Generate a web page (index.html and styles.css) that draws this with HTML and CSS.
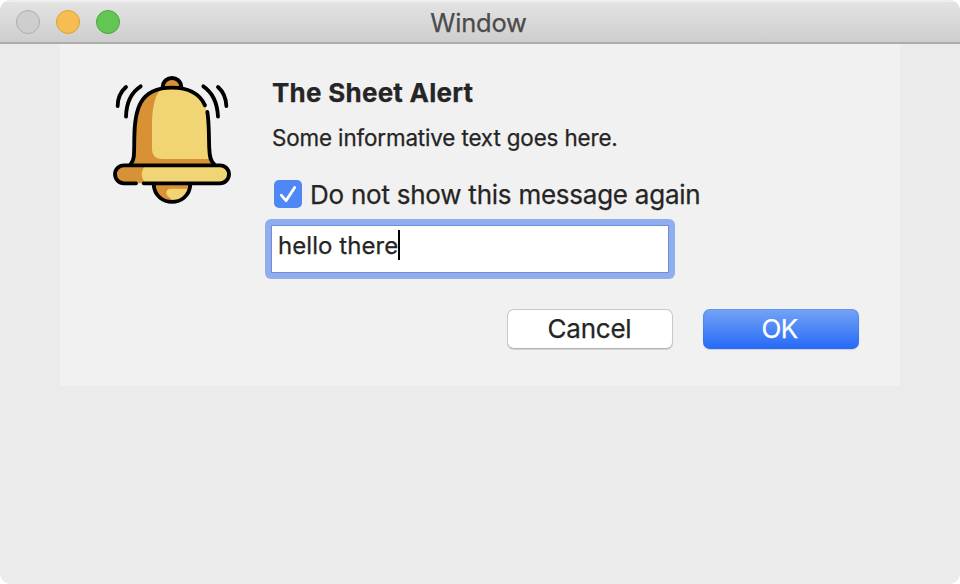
FILE: index.html
```html
<!DOCTYPE html>
<html lang="en">
<head>
<meta charset="utf-8">
<title>Window</title>
<link rel="stylesheet" href="styles.css">
</head>
<body>
<div class="window">
  <header class="titlebar">
    <div class="lights"><span class="light"></span><span class="light minimize"></span><span class="light zoom"></span></div>
    <span class="window-title">Window</span>
  </header>
  <main class="sheet">
    <svg class="bell" viewBox="0 0 435 450" fill="none" stroke-linecap="round" stroke-linejoin="round">
      <path d="M188 66C190 30 242 30 244 66Z" fill="#d99136"/>
      <path d="M160 357C162 429 270 429 272 357Z" fill="#d99136"/>
      <path d="M268 371H212C196 371 195 390 208 397L215 404C244 407 262 394 268 371Z" fill="#f1d474"/>
      <path d="M92 297C104 285 102 269 103 216C104 138 116 68 216 68C316 68 328 138 328 216C329 269 329 285 342 297Z" fill="#d99136"/>
      <path d="M186 71C163 85 156 140 156 180V250C156 272 166 282 188 282H332C328 262 328 240 328 216C328 138 316 68 216 68C206 68 194 68 186 71Z" fill="#f1d474"/>
      <rect x="45" y="301" width="342" height="54" rx="27" fill="#d99136"/>
      <path d="M138 301H360A27 27 0 0 1 360 355H138C121 340 121 316 138 301Z" fill="#f1d474"/>
      <g stroke="#000" stroke-width="11.5">
        <path d="M188 66C190 30 242 30 244 66M161 359C166 428 266 428 271 359"/>
        <path d="M92 297C104 285 102 269 103 216C104 138 116 68 216 68C270 68 300 88 315 121M322 141C328 174 326 220 328 253C329 275 331 287 342 297"/>
        <path d="M108 355H72A27 27 0 0 1 72 301H360A27 27 0 0 1 360 355H131"/>
        <path d="M78 66C62 80 53 100 53 123M122 64C94 82 79 114 78 155M354 66C370 80 378 100 379 123M310 64C337 82 352 114 354 155"/>
      </g>
    </svg>
    <div class="content">
      <h1 class="message">The Sheet Alert</h1>
      <p class="info">Some informative text goes here.</p>
      <div class="suppress">
        <span class="checkbox"><svg viewBox="0 0 28 28"><path d="M7.2 15.2 12 20.7 20.7 7.5" fill="none" stroke="#fff" stroke-width="2.8" stroke-linecap="round" stroke-linejoin="round"/></svg></span>
        <span class="suppress-label">Do not show this message again</span>
      </div>
      <div class="focus-ring">
        <div class="field"><span class="value">hello there</span><span class="caret"></span></div>
      </div>
      <div class="actions">
        <button class="button cancel">Cancel</button>
        <button class="button default">OK</button>
      </div>
    </div>
  </main>
</div>
</body>
</html>
```
FILE: styles.css
```css
* { box-sizing: border-box; }
body { margin: 0; background: #fff; font-family: Inter, "Liberation Sans", sans-serif; color: #252525; }
.window { height: 584px; background: #ebebeb; border-radius: 11px; overflow: hidden; -webkit-text-stroke: 0.25px; }
.titlebar {
  height: 44px; display: grid; grid-template-columns: 1fr auto 1fr; align-items: center;
  background: linear-gradient(#e4e4e4, #cecece); border-bottom: 2px solid #acacac;
  box-shadow: inset 0 2px 0 #efefef;
}
.lights { display: flex; gap: 16px; padding: 2px 0 0 16px; }
.light { width: 24px; height: 24px; border-radius: 50%; background: #cecece; border: 1px solid #adadad; }
.minimize { background: #f6be50; border-color: #dd9f3d; }
.zoom { background: #62c655; border-color: #4aa73c; }
.window-title { font-size: 25.5px; line-height: 32px; letter-spacing: -0.2px; color: #4b4b4b; padding: 3px 3px 0 0; }
.sheet { width: 840px; height: 342px; margin: 0 auto; background: #f1f1f1; padding: 21px 41px 0 40px; display: flex; gap: 27px; }
.bell { width: 145px; height: 150px; flex: none; }
.content { flex: 1; padding-top: 12px; }
.message { margin: 0; font-size: 26px; line-height: 32px; font-weight: 700; letter-spacing: 0.25px; }
.info { margin: 15px 0 28px; font-size: 22.4px; line-height: 28px; letter-spacing: -0.13px; }
.suppress { display: flex; align-items: center; gap: 8px; height: 28px; padding-left: 2px; }
.checkbox { width: 28px; height: 28px; border-radius: 5px; background: #4f88f6; }
.checkbox svg { display: block; }
.suppress-label { font-size: 26px; line-height: 28px; padding-top: 2px; white-space: nowrap; letter-spacing: -0.24px; }
.focus-ring { width: 410px; height: 60px; margin: 11px 0 0 -7px; padding: 6px; border-radius: 6px; background: #90aeef; }
.field { height: 48px; padding: 4px 0 0 6px; background: #fff; border: 1px solid #6f8fd4; display: flex; }
.value { font-size: 24px; line-height: 32px; letter-spacing: 0.07px; }
.caret { width: 2px; height: 30px; background: #000; }
.actions { display: flex; justify-content: flex-end; gap: 30px; margin-top: 30px; }
.button { height: 40px; padding: 0; border-radius: 7px; font: 26px/38px Inter, "Liberation Sans", sans-serif; color: #252525; letter-spacing: -0.25px; }
.cancel { width: 166px; padding-right: 1px; background: #fff; border: 1px solid #c9c9c9; border-bottom-color: #b3b3b3; box-shadow: 0 1px 1px #0002; }
.default { width: 156px; padding-right: 3px; color: #fff; border: 0; background: linear-gradient(#75a4f5, #2569f8); box-shadow: inset 0 0 0 1px #2c6df044, 0 1px 1px #0002; letter-spacing: -0.6px; }
```
